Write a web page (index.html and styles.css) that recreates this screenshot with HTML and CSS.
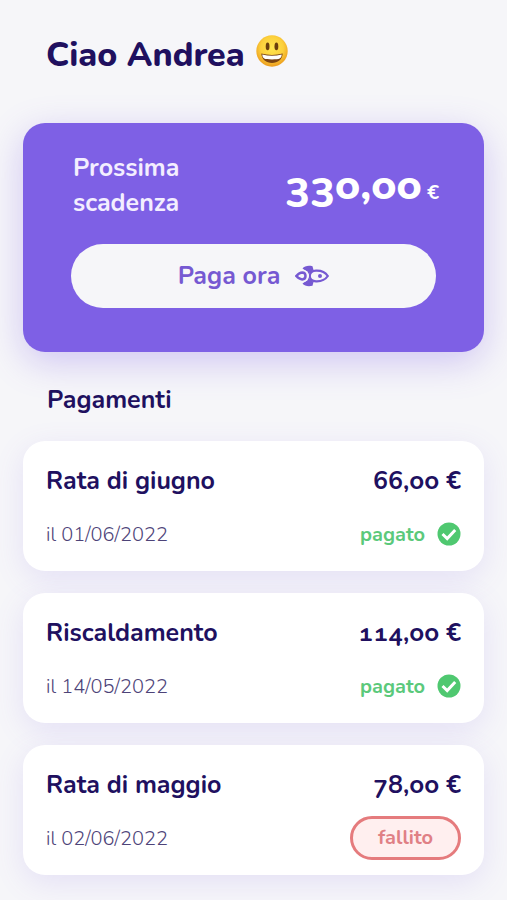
FILE: index.html
```html
<!DOCTYPE html>
<html lang="it">
<head>
<meta charset="utf-8">
<meta name="viewport" content="width=device-width, initial-scale=1">
<title>Pagamenti</title>
<link rel="stylesheet" href="styles.css">
</head>
<body>
<main class="page">
  <h1 class="greeting">Ciao Andrea
    <svg class="smiley" viewBox="0 0 32 32" role="img" aria-label="Faccina sorridente">
      <defs>
        <radialGradient id="face" cx=".5" cy=".4" r=".6">
          <stop offset="0" stop-color="#ffe64f"/>
          <stop offset=".6" stop-color="#fcd03c"/>
          <stop offset="1" stop-color="#eb9b1e"/>
        </radialGradient>
      </defs>
      <circle cx="16" cy="16" r="15.7" fill="url(#face)"/>
      <ellipse cx="11.6" cy="11.4" rx="1.9" ry="3.8" fill="#6b3f0c"/>
      <ellipse cx="20.4" cy="11.4" rx="1.9" ry="3.8" fill="#6b3f0c"/>
      <path d="M5.3 18.6Q16 21.2 26.7 18.6C26.3 24.8 21.8 28 16 28S5.7 24.8 5.3 18.6Z" fill="#7a4312"/>
      <path d="M6.3 19.5Q16 21.9 25.7 19.5C25.4 23.6 24 24.4 16 24.4S6.6 23.6 6.3 19.5Z" fill="#fff"/>
    </svg>
  </h1>

  <section class="due">
    <div class="due-top">
      <h2 class="due-label">Prossima scadenza</h2>
      <p class="due-amount">330,00<span class="due-currency"> €</span></p>
    </div>
    <button class="pay" type="button">Paga ora
      <svg class="rocket" viewBox="0 0 34 22" aria-hidden="true">
        <path d="M7.500 3.500C9.500 .8 13.500 .2 17.500 1.200L18.500 5 14.500 8 12.800 11 14.500 14 18.500 17 17.500 20.800C13.500 21.800 9.500 21.200 7.500 18.500L12.500 15V7Z" fill="currentColor"/>
        <path class="hull" d="M14.800 11C14.800 8.500 16.500 5.900 21 5.700 26 5.500 30.500 7.500 32.800 11 30.500 14.500 26 16.500 21 16.300 16.500 16.100 14.800 13.500 14.800 11Z" stroke-width="2.200"/>
        <circle class="gap" cx="7.800" cy="11" r="6.200"/>
        <path class="hull" d="M1.300 11C3.300 8.800 5.300 7.600 7.200 7.600 11.600 7.700 11.600 14.300 7.200 14.400 5.300 14.400 3.300 13.200 1.300 11Z" stroke-width="2.500"/>
        <circle cx="25" cy="11" r="2" fill="currentColor"/>
      </svg>
    </button>
  </section>

  <h2 class="section-title">Pagamenti</h2>
  <ul class="payments">
    <li class="payment">
      <div class="row row-main"><h3 class="name">Rata di giugno</h3><span class="amount">66,00 €</span></div>
      <div class="row row-status"><time class="date" datetime="2022-06-01">il 01/06/2022</time>
        <span class="paid">pagato
          <svg class="check" viewBox="0 0 24 24" aria-hidden="true"><circle cx="12" cy="12" r="11.500" fill="#4fc870"/><path d="M5.500 12 10.200 16.500 18.200 8" fill="none" stroke="#fff" stroke-width="3"/></svg>
        </span></div>
    </li>
    <li class="payment">
      <div class="row row-main"><h3 class="name">Riscaldamento</h3><span class="amount">114,00 €</span></div>
      <div class="row row-status"><time class="date" datetime="2022-05-14">il 14/05/2022</time>
        <span class="paid">pagato
          <svg class="check" viewBox="0 0 24 24" aria-hidden="true"><circle cx="12" cy="12" r="11.500" fill="#4fc870"/><path d="M5.500 12 10.200 16.500 18.200 8" fill="none" stroke="#fff" stroke-width="3"/></svg>
        </span></div>
    </li>
    <li class="payment">
      <div class="row row-main"><h3 class="name">Rata di maggio</h3><span class="amount">78,00 €</span></div>
      <div class="row row-status"><time class="date" datetime="2022-06-02">il 02/06/2022</time>
        <span class="failed">fallito</span></div>
    </li>
  </ul>
</main>
</body>
</html>
```
FILE: styles.css
```css
* { box-sizing: border-box; }
body, h1, h2, h3, p, ul { margin: 0; padding: 0; }
body {
  background: #f6f6f9;
  color: #20105f;
  font-family: Nunito, "Open Sans", "Noto Sans", sans-serif;
}
.page { padding: 31px 23px 26px; }
.greeting {
  display: flex;
  align-items: center;
  gap: 11px;
  padding-left: 23px;
  font-size: 34px;
  line-height: 48px;
  font-weight: 800;
}
.smiley { width: 32px; height: 32px; margin-bottom: 8px; }
.due {
  display: grid;
  gap: 23px;
  margin-top: 44px;
  padding: 28px 45px 44px;
  border-radius: 22px;
  background: #7e60e5;
  color: #fff;
  box-shadow: 0 10px 36px rgba(126, 96, 229, .32);
}
.due-top { display: flex; justify-content: space-between; align-items: center; }
.due-label {
  width: 130px;
  padding-left: 5px;
  color: #f3eeff;
  font-size: 25px;
  line-height: 35px;
  font-weight: 700;
}
.due-amount {
  font-size: 42px;
  line-height: 70px;
  font-weight: 800;
  font-variant-numeric: oldstyle-nums;
  white-space: nowrap;
}
.due-currency { font-size: 20px; line-height: 20px; font-weight: 700; }
.pay {
  display: flex;
  align-items: center;
  justify-content: center;
  gap: 15px;
  height: 64px;
  margin: 0 3px;
  border: 0;
  border-radius: 32px;
  background: #f6f6f9;
  color: #7659d2;
  font: inherit;
  font-size: 25px;
  font-weight: 700;
}
.rocket { width: 34px; height: 22px; }
.hull { fill: #f6f6f9; stroke: currentColor; }
.gap { fill: #f6f6f9; }
.section-title {
  margin: 30px 0 23px;
  padding-left: 24px;
  font-size: 25px;
  line-height: 36px;
  font-weight: 700;
}
.payments { display: grid; gap: 22px; list-style: none; }
.payment {
  padding: 22px 23px 15px;
  border-radius: 22px;
  background: #fff;
  box-shadow: 0 8px 30px rgba(126, 96, 229, .14);
}
.row { display: flex; justify-content: space-between; align-items: center; }
.row-main { height: 36px; }
.row-status { height: 44px; margin-top: 13px; }
.name, .amount { font-size: 25px; font-weight: 700; }
.amount { font-variant-numeric: oldstyle-nums; }
.date { color: #4d4378; font-size: 20px; font-weight: 300; }
.paid {
  display: flex;
  align-items: center;
  gap: 12px;
  color: #5bc97b;
  font-size: 20px;
  font-weight: 700;
}
.check { width: 24px; height: 24px; }
.failed {
  padding: 0 25px;
  border: 3px solid #e57b7d;
  border-radius: 22px;
  background: #ffefef;
  color: #e08085;
  font-size: 20px;
  line-height: 38px;
  font-weight: 700;
}
```
